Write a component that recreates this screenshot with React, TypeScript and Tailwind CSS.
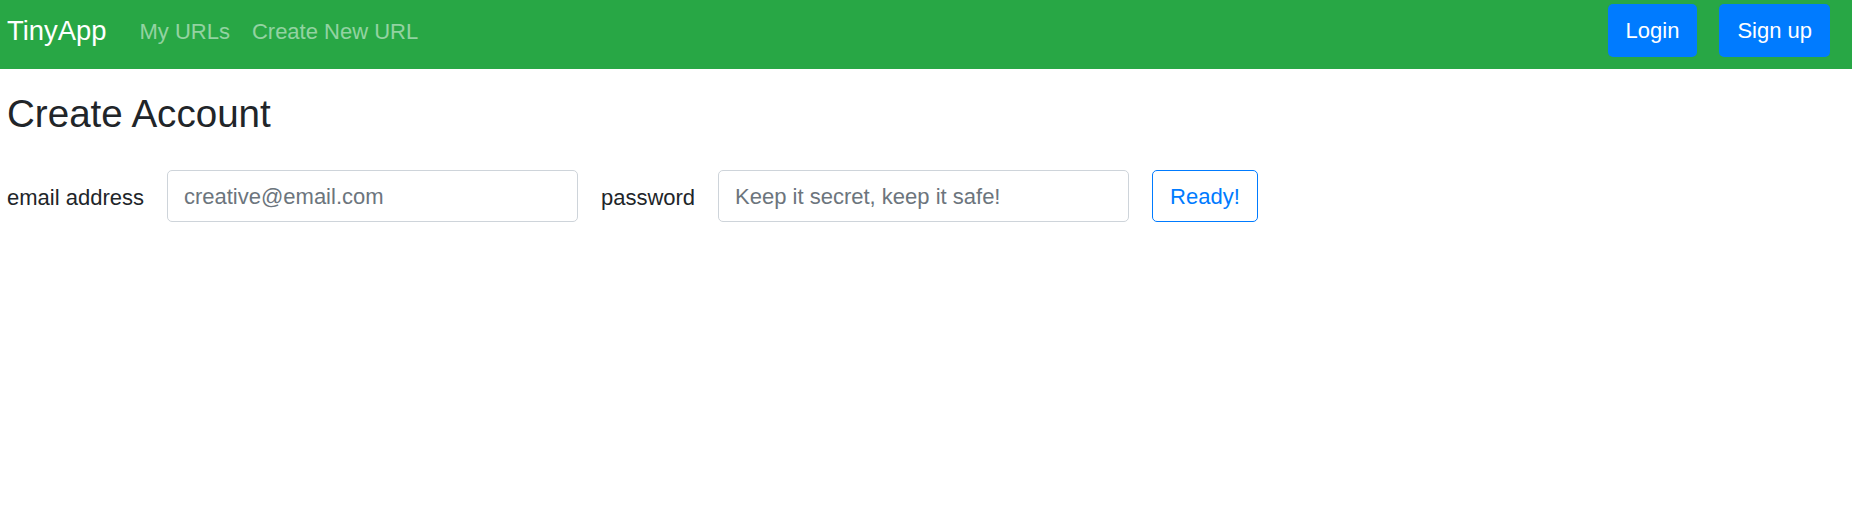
export default function App() {
  return (
    <div className="min-h-[520px] bg-white font-['Liberation_Sans',Arial,sans-serif] text-[#212529]">
      {/* Navbar */}
      <nav className="flex h-[69px] items-start bg-[#28a745] pl-[7px] pr-[22px] pt-[4px]">
        <div className="flex h-[53px] flex-1 items-center">
          <a className="mr-[22px] text-[27.4px] leading-[40px] text-white">TinyApp</a>
          <a className="mt-[2px] px-[11px] text-[22px] leading-[33px] text-white/50">My URLs</a>
          <a className="mt-[2px] px-[11px] text-[22px] leading-[33px] text-white/50">Create New URL</a>
        </div>
        <div className="flex h-[53px] items-center gap-[22px]">
          <button className="h-[53px] rounded-[5px] bg-[#007bff] px-[18px] text-[22px] leading-[33px] text-white">
            Login
          </button>
          <button className="h-[53px] rounded-[5px] bg-[#007bff] px-[18px] text-[22px] leading-[33px] text-white">
            Sign up
          </button>
        </div>
      </nav>

      {/* Content */}
      <main className="px-[7px] pt-[22px]">
        <h3 className="text-[38.6px] leading-[1.2] font-normal">Create Account</h3>

        <form className="mt-[33px] flex items-center gap-[23px]" onSubmit={(e) => e.preventDefault()}>
          <label className="mt-[2px] text-[22px] leading-[33px]">email address</label>
          <input
            type="email"
            placeholder="creative@email.com"
            className="h-[52px] w-[411px] rounded-[5px] border border-[#ced4da] px-[16px] pt-[1px] text-[22px] text-[#495057] placeholder:text-[#6c757d] outline-none"
          />
          <label className="mt-[2px] text-[22px] leading-[33px]">password</label>
          <input
            type="password"
            placeholder="Keep it secret, keep it safe!"
            className="h-[52px] w-[411px] rounded-[5px] border border-[#ced4da] px-[16px] pt-[1px] text-[22px] text-[#495057] placeholder:text-[#6c757d] outline-none"
          />
          <button
            type="submit"
            className="h-[52px] rounded-[5px] border border-[#007bff] px-[17px] pt-[1px] text-[22px] text-[#007bff]"
          >
            Ready!
          </button>
        </form>
      </main>
    </div>
  );
}
